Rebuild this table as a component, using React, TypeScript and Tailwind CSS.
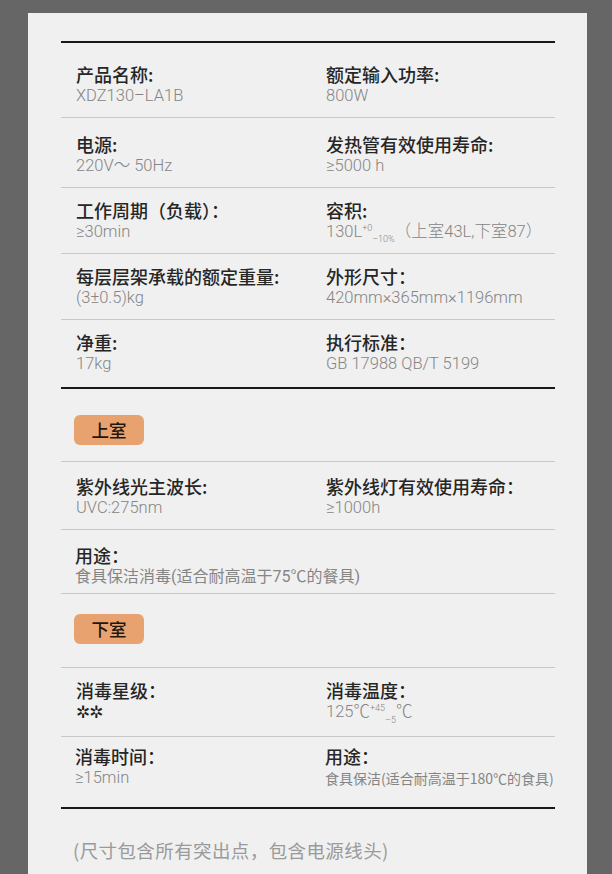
import React from 'react';

const labelCls =
  "font-['Noto_Sans_CJK_SC',sans-serif] font-medium text-[18px] leading-[22px] text-[#262626] whitespace-nowrap";
const valueCls =
  "font-['Roboto','Noto_Sans_CJK_SC',sans-serif] font-light text-[16.5px] leading-[22px] text-[#858585] whitespace-nowrap";

interface Cell {
  label: string;
  value: React.ReactNode;
  valueClass?: string;
}

function Field({ label, value, valueClass }: Cell) {
  return (
    <div>
      <p className={labelCls}>{label}</p>
      <div className={valueClass ?? valueCls}>{value}</div>
    </div>
  );
}

function SpecRow({ cells, className }: { cells: Cell[]; className: string }) {
  return (
    <div className={`grid grid-cols-[250px_1fr] pl-[15px] border-b border-[#c8c8c8] ${className}`}>
      {cells.map((c, i) => (
        <Field key={i} {...c} />
      ))}
    </div>
  );
}

function Badge({ text }: { text: string }) {
  return (
    <div className="ml-[13px] flex h-[30px] w-[70px] items-center justify-center rounded-[6px] bg-[#e8a26f] font-['Noto_Sans_CJK_SC',sans-serif] text-[17.5px] font-medium text-[#1f1710]">
      {text}
    </div>
  );
}

export default function App() {
  return (
    <div className="h-[874px] overflow-hidden bg-[#666666]">
      <div className="ml-[28px] mt-[13px] w-[559px] min-h-[900px] bg-[#f0f0f0] pl-[33px] pr-[32px] pt-[28px]">
        <div className="h-[2px] bg-[#181818]" />

        <SpecRow
          className="h-[75px] pt-[20px]"
          cells={[
            { label: '产品名称:', value: 'XDZ130–LA1B' },
            { label: '额定输入功率:', value: '800W' },
          ]}
        />
        <SpecRow
          className="h-[70px] pt-[15px]"
          cells={[
            { label: '电源:', value: '220V～ 50Hz' },
            { label: '发热管有效使用寿命:', value: '≥5000 h' },
          ]}
        />
        <SpecRow
          className="h-[66px] pt-[11px]"
          cells={[
            { label: '工作周期（负载）：', value: '≥30min' },
            {
              label: '容积:',
              value: (
                <span>
                  130L
                  <span className="relative -top-[6px] text-[9px]">+0</span>
                  <span className="relative top-[5px] text-[9px]">–10%</span>
                  <span>（上室43L,下室87）</span>
                </span>
              ),
            },
          ]}
        />
        <SpecRow
          className="h-[66px] pt-[11px]"
          cells={[
            { label: '每层层架承载的额定重量:', value: '(3±0.5)kg' },
            { label: '外形尺寸：', value: '420mm×365mm×1196mm' },
          ]}
        />
        <div className="grid h-[67px] grid-cols-[250px_1fr] pl-[15px] pt-[11px]">
          <Field label="净重:" value="17kg" />
          <Field label="执行标准：" value="GB 17988 QB/T 5199" />
        </div>
        <div className="h-[2px] bg-[#181818]" />

        <div className="border-b border-[#c8c8c8] pb-[16px] pt-[26px]">
          <Badge text="上室" />
        </div>
        <SpecRow
          className="h-[68px] pt-[13px]"
          cells={[
            { label: '紫外线光主波长:', value: 'UVC:275nm' },
            { label: '紫外线灯有效使用寿命：', value: '≥1000h' },
          ]}
        />
        <div className="h-[64px] border-b border-[#c8c8c8] pl-[14px] pt-[14px]">
          <Field
            label="用途："
            value="食具保洁消毒(适合耐高温于75℃的餐具)"
            valueClass="font-['Roboto','Noto_Sans_CJK_SC',sans-serif] text-[16px] leading-[22px] text-[#858585] whitespace-nowrap"
          />
        </div>

        <div className="border-b border-[#c8c8c8] pb-[23px] pt-[20px]">
          <Badge text="下室" />
        </div>
        <SpecRow
          className="h-[69px] pt-[11px]"
          cells={[
            {
              label: '消毒星级：',
              value: '✲✲',
              valueClass:
                "font-['DejaVu_Sans',sans-serif] font-bold text-[17px] leading-[22px] text-[#222] tracking-[-1px]",
            },
            {
              label: '消毒温度：',
              value: (
                <span>
                  125℃
                  <span className="relative -top-[6px] text-[9px]">+45</span>
                  <span className="relative top-[6px] text-[9px]">–5</span>
                  ℃
                </span>
              ),
            },
          ]}
        />
        <div className="grid h-[70px] grid-cols-[250px_1fr] pl-[14px] pt-[8px]">
          <Field label="消毒时间：" value="≥15min" />
          <Field
            label="用途："
            value="食具保洁(适合耐高温于180℃的食具)"
            valueClass="font-['Noto_Sans_CJK_SC',sans-serif] text-[14px] leading-[22px] text-[#858585] whitespace-nowrap"
          />
        </div>
        <div className="h-[2px] bg-[#181818]" />

        <p className="mt-[30px] pl-[12px] font-['Noto_Sans_CJK_SC',sans-serif] text-[18.5px] leading-[22px] tracking-[0.4px] text-[#9a9a9a]">
          (尺寸包含所有突出点，包含电源线头)
        </p>
      </div>
    </div>
  );
}
